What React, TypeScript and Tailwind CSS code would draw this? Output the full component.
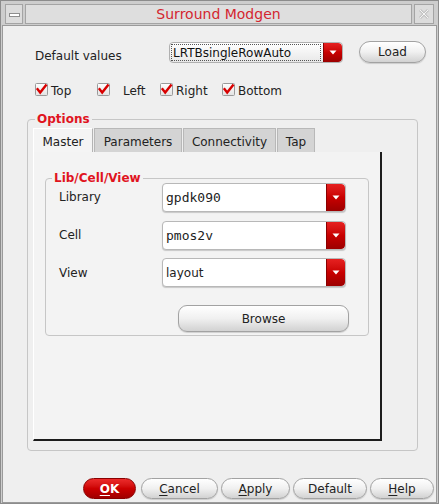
import React from "react";

const FONT = { fontFamily: '"DejaVu Sans", "Liberation Sans", sans-serif' };
const MONO = { fontFamily: '"DejaVu Sans Mono", "Liberation Mono", monospace' };

function Arrow() {
  return (
    <svg width="8" height="5" viewBox="0 0 8 5">
      <path d="M0.5 0.5H7.5L4 4.5Z" fill="#ffffff" />
    </svg>
  );
}

function RedPart({ h }: { h: string }) {
  return (
    <div
      className={`w-[19px] ${h} flex items-center justify-center rounded-r-[4px] bg-linear-to-b from-[#e62020] via-[#c80000] to-[#9c0000] border-l border-[#8a0000]`}
    >
      <Arrow />
    </div>
  );
}

function Combo({ text, mono }: { text: string; mono?: boolean }) {
  return (
    <div className="flex h-[29px] w-[184px] rounded-[4px] border border-[#b8b8b8] bg-white shadow-[0_1px_1px_rgba(0,0,0,0.18)] overflow-hidden">
      <div
        className="flex-1 flex items-center pl-[3px] text-[#222] leading-none"
        style={mono ? { ...MONO, fontSize: 13 } : { ...FONT, fontSize: 12 }}
      >
        {text}
      </div>
      <RedPart h="h-full" />
    </div>
  );
}

function Check() {
  return (
    <svg width="13" height="13" viewBox="0 0 13 13">
      <defs>
        <linearGradient id="cbg" x1="0" y1="0" x2="0" y2="1">
          <stop offset="0" stopColor="#ffffff" />
          <stop offset="1" stopColor="#e2e2e2" />
        </linearGradient>
      </defs>
      <rect x="0.5" y="0.5" width="12" height="12" rx="1" fill="url(#cbg)" stroke="#9a9a9a" />
      <path d="M2.6 6.2 L5.2 9.6 L10.8 2.4" fill="none" stroke="#d80000" strokeWidth="2.4" strokeLinecap="square" />
    </svg>
  );
}

function CheckItem({ label, w, gap }: { label: string; w: string; gap: string }) {
  return (
    <div className={`flex items-center ${w} h-[13px]`}>
      <Check />
      <span className={`${gap} text-[12px] text-[#222] leading-none mt-[2px]`}>{label}</span>
    </div>
  );
}

function Btn({
  w,
  h,
  children,
  className = "",
  round = "rounded-[11px]",
}: {
  w: string;
  h: string;
  children: React.ReactNode;
  className?: string;
  round?: string;
}) {
  return (
    <div
      className={`${w} ${h} ${round} flex items-center justify-center border border-[#a2a2a2] bg-linear-to-b from-[#ffffff] via-[#f0f0f0] to-[#d2d2d2] text-[12px] text-[#222] leading-none shadow-[0_1px_1px_rgba(0,0,0,0.15)] ${className}`}
    >
      {children}
    </div>
  );
}

export default function App() {
  return (
    <div
      className="w-[439px] h-[504px] bg-[#cdcdcd] border border-[#8c8c8c] flex flex-col"
      style={FONT}
    >
      {/* title bar */}
      <div className="mt-[3px] mx-[4px] h-[20px] flex gap-[2px]">
        <div className="w-[18px] h-full border border-[#a4a4a4] bg-[#dcdcdc] flex items-center justify-center">
          <div className="w-[11px] h-[4px] bg-white border border-[#8e8e8e] mt-[2px]" />
        </div>
        <div className="flex-1 h-full border border-[#a4a4a4] bg-[#dedede] flex items-center justify-center">
          <span className="text-[14px] text-[#d42630] leading-none">Surround Modgen</span>
        </div>
        <div className="w-[20px] h-full border border-[#a4a4a4] bg-[#dcdcdc] flex items-center justify-center">
          <svg width="12" height="12" viewBox="0 0 12 12">
            <path d="M2 2L10 10M10 2L2 10" stroke="#c4c4c4" strokeWidth="3" />
            <path d="M2 2L10 10M10 2L2 10" stroke="#f4f4f4" strokeWidth="1" />
          </svg>
        </div>
      </div>

      {/* body */}
      <div className="flex-1 mx-[1px] mt-[1px] border border-[#9a9a9a] bg-[#efefef] flex flex-col">
        {/* default values row */}
        <div className="mt-[15px] pl-[32px] h-[22px] flex items-start">
          <div className="w-[134px] mt-[9px] text-[12px] text-[#222] leading-none">Default values</div>
          <div className="mt-[1px] w-[174px] h-[21px] flex rounded-[4px] border border-[#b0b0b0] bg-linear-to-b from-[#ffffff] to-[#e8e8e8] overflow-hidden">
            <div className="flex-1 flex items-center pl-[1px] py-[1px]">
              <div className="w-full h-full border border-dotted border-[#555] flex items-center pl-[1px] text-[12px] text-[#111] leading-none">
                LRTBsingleRowAuto
              </div>
            </div>
            <div className="w-[2px]" />
            <RedPart h="h-full" />
          </div>
          <Btn w="w-[67px] ml-[16px]" h="h-[22px]" round="rounded-full">
            Load
          </Btn>
        </div>

        {/* checkboxes */}
        <div className="mt-[20px] pl-[32px] flex">
          <CheckItem label="Top" w="w-[62px]" gap="ml-[3px]" />
          <CheckItem label="Left" w="w-[63px]" gap="ml-[13px]" />
          <CheckItem label="Right" w="w-[62px]" gap="ml-[3px]" />
          <CheckItem label="Bottom" w="w-[80px]" gap="ml-[3px]" />
        </div>

        {/* options group */}
        <div className="relative mt-[23px] ml-[24px] w-[391px] h-[332px] rounded-[4px] border border-[#c6c6c6] pt-[8px] pl-[5px]">
          <div className="absolute left-[7px] top-[-7px] px-[2px] bg-[#efefef] text-[12px] font-bold text-[#e0141e] leading-none">
            Options
          </div>

          {/* tabs */}
          <div className="flex items-end h-[24px]">
            <div className="w-[60px] h-[24px] pt-[3px] bg-[#f4f4f4] border-l border-t border-white border-r border-r-[#b4b4b4] flex items-center justify-center text-[12px] text-[#222] leading-none">
              Master
            </div>
            <div className="ml-[1px] w-[88px] h-[24px] pt-[3px] bg-[#d4d4d4] border border-[#b8b8b8] border-b-0 flex items-center justify-center text-[12px] text-[#222] leading-none">
              Parameters
            </div>
            <div className="ml-[1px] w-[93px] h-[24px] pt-[3px] bg-[#d4d4d4] border border-[#b8b8b8] border-b-0 flex items-center justify-center text-[12px] text-[#222] leading-none">
              Connectivity
            </div>
            <div className="ml-[1px] w-[38px] h-[24px] pt-[3px] bg-[#d4d4d4] border border-[#b8b8b8] border-b-0 flex items-center justify-center text-[12px] text-[#222] leading-none">
              Tap
            </div>
          </div>

          {/* tab panel */}
          <div className="w-[349px] h-[289px] bg-[#f3f3f3] border-l border-l-white border-r-2 border-b-2 border-r-[#1c1c1c] border-b-[#1c1c1c] pt-[26px] pl-[11px]">
            <div className="relative w-[324px] h-[158px] rounded-[4px] border border-[#c6c6c6] pt-[4px]">
              <div className="absolute left-[6px] top-[-7px] px-[2px] bg-[#f3f3f3] text-[12px] font-bold text-[#e0141e] leading-none">
                Lib/Cell/View
              </div>

              <div className="flex h-[29px]">
                <div className="w-[116px] pl-[13px] pt-[8px] text-[12px] text-[#222] leading-none">Library</div>
                <Combo text="gpdk090" mono />
              </div>
              <div className="flex h-[29px] mt-[9px]">
                <div className="w-[116px] pl-[13px] pt-[8px] text-[12px] text-[#222] leading-none">Cell</div>
                <Combo text="pmos2v" mono />
              </div>
              <div className="flex h-[29px] mt-[8px]">
                <div className="w-[116px] pl-[13px] pt-[9px] text-[12px] text-[#222] leading-none">View</div>
                <Combo text="layout" />
              </div>

              <Btn w="w-[171px] mt-[18px] ml-[132px]" h="h-[27px]" round="rounded-[9px]">
                Browse
              </Btn>
            </div>
          </div>
        </div>

        {/* bottom buttons */}
        <div className="mt-[27px] pl-[80px] flex h-[21px]">
          <div className="w-[53px] h-[21px] rounded-[11px] border border-[#8a0000] bg-linear-to-b from-[#ec2a2a] via-[#cc0000] to-[#a00000] flex items-center justify-center text-[12px] font-bold text-white leading-none">
            <span className="underline underline-offset-2">O</span>K
          </div>
          <Btn w="w-[77px] ml-[5px]" h="h-[21px]">
            <span className="underline underline-offset-2">C</span>ancel
          </Btn>
          <Btn w="w-[69px] ml-[3px]" h="h-[21px]">
            <span className="underline underline-offset-2">A</span>pply
          </Btn>
          <Btn w="w-[74px] ml-[3px]" h="h-[21px]">
            Default
          </Btn>
          <Btn w="w-[64px] ml-[3px]" h="h-[21px]">
            <span className="underline underline-offset-2">H</span>elp
          </Btn>
        </div>
      </div>
    </div>
  );
}
